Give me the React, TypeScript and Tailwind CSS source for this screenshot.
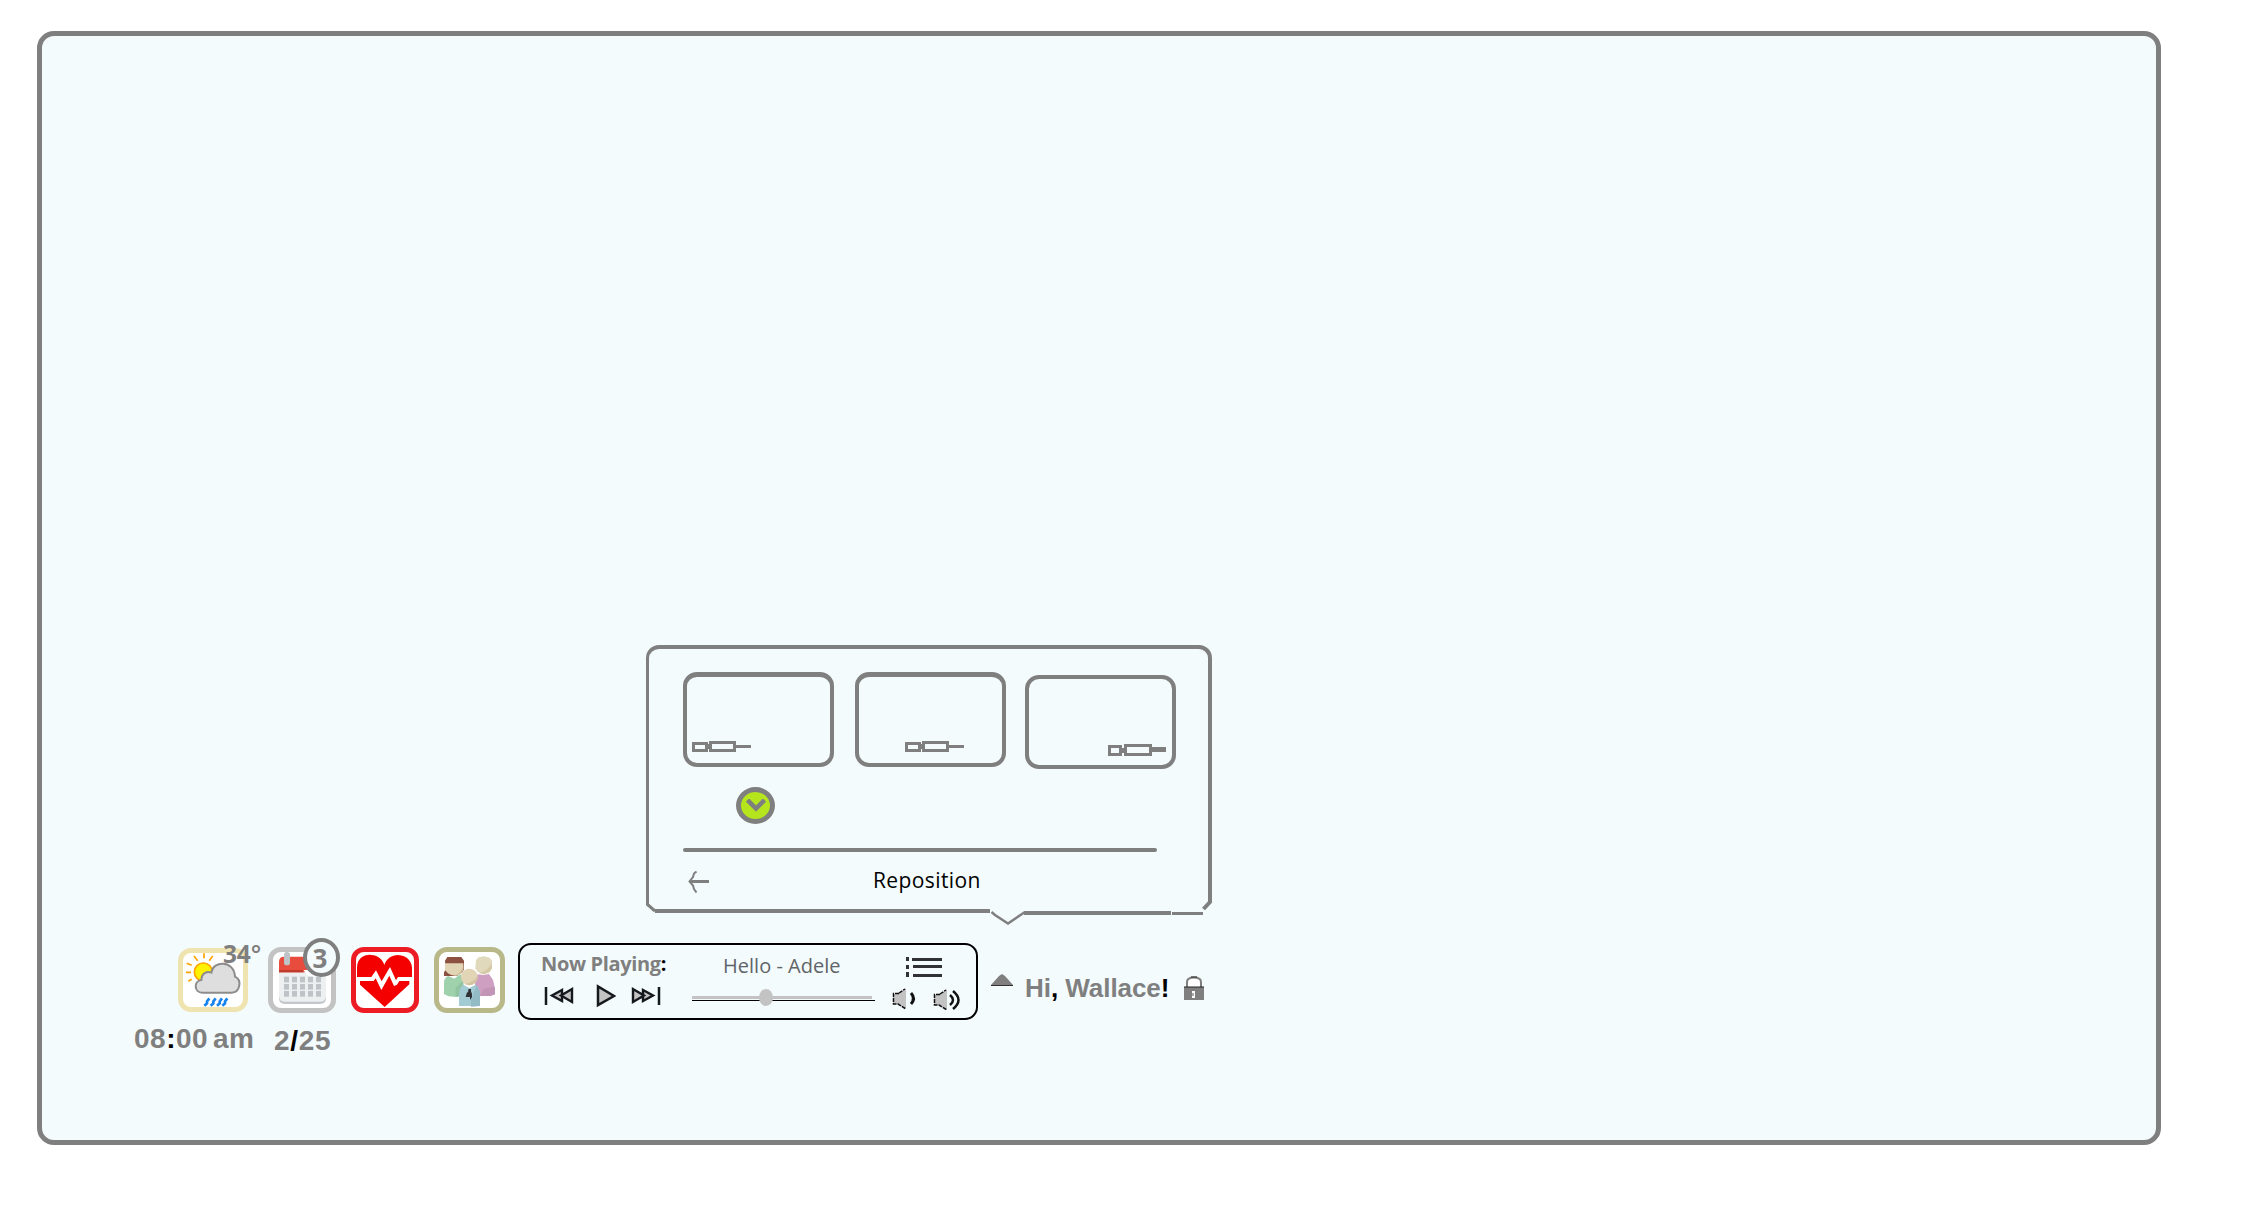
import type { ReactNode } from "react";

const GRAY = "#7f7f7f";

function DockGlyph({ tall = false }: { tall?: boolean }) {
  return (
    <svg width="60" height="12" viewBox="0 0 60 12" fill="none" stroke={GRAY} shapeRendering="crispEdges">
      {tall ? (
        <path d="M1.500 2.500H12.500V10.500H1.500ZM17.500 1.500H42.500V10.500H17.500Z" strokeWidth="3" />
      ) : (
        <path d="M1.500 3.500H14.500V10.500H1.500ZM18.500 2.500H42.500V10.500H18.500Z" strokeWidth="3" />
      )}
      <path d="M13 6.500H18" strokeWidth="5" />
      <path d={tall ? "M44 5.500H58" : "M44 6.500H59"} strokeWidth={tall ? 5 : 3} />
    </svg>
  );
}

function ScreenOption({ className, children }: { className: string; children: ReactNode }) {
  return (
    <button className={`flex w-[151px] shrink-0 items-end rounded-[14px] border-4 border-[#7f7f7f] ${className}`}>
      {children}
    </button>
  );
}

function RepositionPanel() {
  return (
    <section className="ml-[604px] flex h-[281px] w-[566px] flex-col">
      <div className="h-[255px] rounded-t-[13px] border-t-4 border-r-4 border-l-[3px] border-[#7f7f7f] pt-[23px] pl-[34px]">
        <div className="flex h-[97px] items-start">
          <ScreenOption className="h-[95px] border-t-[5px] pb-[11px] pl-[5px]">
            <DockGlyph />
          </ScreenOption>
          <ScreenOption className="ml-[21px] h-[95px] border-t-[5px] pb-[11px] pl-[46px]">
            <DockGlyph />
          </ScreenOption>
          <ScreenOption className="mt-[3px] ml-[19px] h-[94px] pb-[9px] pl-[79px]">
            <DockGlyph tall />
          </ScreenOption>
        </div>
        <div className="mt-[18px] ml-[53px] flex h-[37px] w-[39px] items-center justify-center rounded-[50%] border-[5px] border-[#7f7f7f] bg-[#b5e61d]">
          <svg className="shrink-0" width="20" height="13" viewBox="0 0 20 13" fill="none" stroke={GRAY} strokeWidth="4.500">
            <path d="M1.500 1L10 9.500L18.500 1" />
          </svg>
        </div>
        <div className="mt-6 h-1 w-[474px] rounded-full bg-[#7f7f7f]" />
        <div className="flex items-start pt-[18px]">
          <svg className="mt-px ml-[5px]" width="21" height="22" viewBox="0 0 21 22" fill="none" stroke={GRAY}>
            <path d="M2 10.500H21" strokeWidth="3" />
            <path d="M8.500 .5L6 2.500L5 6L1.500 10.500L5 14.500L6 18L8.500 21.500" strokeWidth="2" />
          </svg>
          <span className="ml-[164px] font-['Open_Sans',sans-serif] text-[21px] leading-none tracking-[0.4px] whitespace-nowrap text-black">
            Reposition
          </span>
        </div>
      </div>
      <svg width="566" height="26" viewBox="0 0 566 26" fill="none" stroke={GRAY}>
        <path d="M1.500 0V4.500L9 11" strokeWidth="3" />
        <path d="M9 11H344" strokeWidth="4" />
        <path d="M345.500 12L349 15L362 23.500L376 14L379 12" strokeWidth="2.500" />
        <path d="M378 13H525" strokeWidth="4" />
        <path d="M526 13.500H557" strokeWidth="3" />
        <path d="M564 0V2L557.500 9" strokeWidth="4" />
      </svg>
    </section>
  );
}

function WeatherIcon() {
  return (
    <svg width="60" height="54" viewBox="189 99 180 162">
      <g stroke="#ffa400" strokeWidth="5">
        <path d="M252 100V115M278 108L268 122M222 108L233 122M200 130L215 136M198 157H213M205 184L215 178" />
      </g>
      <circle cx="250" cy="156" r="27" fill="#fff200" stroke="#ffa400" strokeWidth="5" />
      <path
        d="M247 218C222 218 220 183 244 180C245 160 260 153 274 158C279 121 342 119 345 170C367 180 360 218 335 218Z"
        fill="#dededf"
        stroke="#8c8c8c"
        strokeWidth="6"
      />
      <path
        d="M268 235L261 244V250L253 257M287 235L280 244V250L272 257M306 235L299 244V250L291 257M322 235L315 244V250L307 257"
        fill="none"
        stroke="#1684ee"
        strokeWidth="8"
      />
    </svg>
  );
}

function CalendarIcon() {
  const rows = [170, 192, 213];
  const cols = [492, 516, 540, 564, 588];
  return (
    <svg width="58" height="56" viewBox="459 96 174 168">
      <path d="M477 150H618V235Q618 252 600 252H495Q477 252 477 235Z" fill="#c3c7cb" />
      <path d="M477 150H618V228Q618 245 600 245H495Q477 245 477 228Z" fill="#ecf0f1" />
      <path d="M477 157V126Q477 110 492 110H618V157Z" fill="#e84c3d" />
      <path d="M477 150H550V157H477Z" fill="#c0392b" />
      <path d="M550 150L566 170H618V150Z" fill="#fff" />
      <rect x="492" y="96" width="18" height="40" rx="8" fill="#bdc3c7" />
      {rows.map((y) =>
        cols.map((x) => <rect key={`${x}-${y}`} x={x} y={y} width="15" height="17" fill="#bdc3c7" />),
      )}
    </svg>
  );
}

function HeartIcon() {
  return (
    <svg width="58" height="56" viewBox="48 96 174 168" fill="#f40000">
      <path d="M51 171V144C51 108 84 103 93 105C113 105 129 119 133 135C139 116 156 105 174 105C201 106 216 124 216 145V171H174L168 181L150 141L125 184L108 151L94 171Z" />
      <path d="M60 183H101L107 175L124 210L148 167L162 198L171 194L178 183H208V193L134 261L60 194Z" />
    </svg>
  );
}

function PeopleIcon() {
  return (
    <svg width="61" height="56" viewBox="297 96 183 168">
      <path d="M312 168V156L317 151L315 122L322 111H364L372 122V148L366 158L350 168Z" fill="#8d5142" />
      <path d="M315 130H370V145Q366 166 345 167Q322 165 315 148Z" fill="#e1d5b5" />
      <path d="M370 136V147Q365 166 345 167Q366 155 370 136Z" fill="#d2c49f" />
      <path d="M325 168L343 176L360 163L370 170V225L350 231L325 229L312 222V185Q314 172 325 168Z" fill="#9fd1ad" />
      <path d="M347 231V204L370 180V226Z" fill="#93c4a1" />
      <path d="M413 163L430 165L447 162L459 180L465 205V223L450 228H412L405 220V180Z" fill="#cf9fc2" />
      <path d="M463 200L465 223L450 228H420L430 207Z" fill="#c294b5" />
      <path d="M408 120L416 112L432 109L449 113L456 122V145L448 157L432 163L414 157L406 145Z" fill="#e1d9bc" />
      <path d="M456 130V145L448 157L432 163L417 159Q443 153 456 130Z" fill="#d5c9a5" />
      <path d="M370 194L388 204L407 194L416 205L420 222V258H357V222Q359 202 370 194Z" fill="#a3cbd4" />
      <path d="M410 195L420 215V258L393 260V241Z" fill="#93bbc5" />
      <circle cx="388" cy="171" r="25" fill="#e1d5b5" />
      <path d="M413 168Q413 193 388 196L374 192Q403 187 413 168Z" fill="#d2c49f" />
      <path d="M385 207H393V214L396 222V232L390 240V231H377L380 220L385 214Z" fill="#303236" />
    </svg>
  );
}

function Tile({ className, children }: { className: string; children: ReactNode }) {
  return (
    <div className={`relative flex shrink-0 items-center justify-center rounded-[13px] border-[5px] bg-white ${className}`}>
      {children}
    </div>
  );
}

function SkipIcon({ flip = false }: { flip?: boolean }) {
  return (
    <svg
      className={flip ? "-scale-x-100" : ""}
      width="30"
      height="20"
      viewBox="0 0 30 20"
      fill="#c3c3c3"
      stroke="#15181c"
      strokeWidth="2.400"
    >
      <path d="M2 1V19" strokeWidth="2.500" />
      <path d="M18 4V15L8 9.500ZM28 3V16L17 9.500Z" />
    </svg>
  );
}

function Speaker({ loud = false }: { loud?: boolean }) {
  return (
    <svg width="28" height="22" viewBox="0 0 28 22" fill="none">
      <path d="M1 6H6L14 0V21L6 16H1Z" fill="#c3c3c3" />
      <path d="M7 5.500H1.500V16H6L14 21M7 5L13 1" stroke="#111" strokeWidth="1.500" strokeDasharray="4 1" />
      {loud ? (
        <path d="M17 6Q23 11 17 16M20 2Q31 11 20 20" stroke="#111" strokeWidth="2.500" />
      ) : (
        <path d="M19 5Q24 10.500 19 16" stroke="#111" strokeWidth="3" />
      )}
    </svg>
  );
}

function Player() {
  return (
    <div className="mt-[5px] ml-[13px] flex h-[77px] w-[460px] shrink-0 flex-col rounded-[13px] border-2 border-black">
      <div className="flex h-[36px] items-start pt-[9px] pl-[21px] font-['Open_Sans',sans-serif] text-[20px] leading-none whitespace-nowrap text-[#7f7f7f]">
        <span className="w-[182px] font-bold tracking-[-0.35px]">
          Now Playing<span className="text-black">:</span>
        </span>
        <span className="mt-[2px] w-[183px] tracking-[0.02px] text-[#606468]">Hello - Adele</span>
        <svg className="mt-[3px]" width="36" height="20" viewBox="0 0 36 20" fill="#303236" shapeRendering="crispEdges">
          <path d="M0 0H3V4H0ZM6 1H36V4H6ZM0 8H3V12H0ZM7 8H36V11H7ZM0 15H3V20H0ZM7 17H36V20H7Z" />
        </svg>
      </div>
      <div className="flex items-start pl-[24px]">
        <div className="mt-[5px]">
          <SkipIcon />
        </div>
        <svg className="mt-[3px] ml-[22px]" width="20" height="24" viewBox="0 0 20 24" fill="#c3c3c3" stroke="#15181c" strokeWidth="2.500">
          <path d="M2 2.500V21L18 12Z" />
        </svg>
        <div className="mt-[5px] ml-[15px]">
          <SkipIcon flip />
        </div>
        <div className="relative mt-[15px] ml-[31px] w-[183px]">
          <div className="h-[3px] w-[180px] bg-[#c3c3c3]" />
          <div className="mt-px h-px w-[183px] bg-black" />
          <div className="absolute -top-[7px] left-[67px] h-[17px] w-[14px] rounded-[50%] bg-[#c3c3c3]" />
        </div>
        <div className="mt-[7px] ml-[17px]">
          <Speaker />
        </div>
        <div className="mt-[8px] ml-[13px]">
          <Speaker loud />
        </div>
      </div>
    </div>
  );
}

function Greeting() {
  return (
    <div className="mt-[36px] ml-[13px] flex shrink-0 items-start">
      <svg width="22" height="12" viewBox="0 0 22 12">
        <path d="M0 11L8 2L11 0L14 2L22 11Z" fill={GRAY} />
        <path d="M0 11.500H22" stroke="#333" />
      </svg>
      <span className="mt-px ml-[12px] w-[159px] font-['Liberation_Sans',sans-serif] text-[26px] leading-none font-bold tracking-[-0.05px] whitespace-nowrap text-[#7f7f7f]">
        Hi<span className="text-black">,</span> Wallace<span className="text-black">!</span>
      </span>
      <svg className="mt-[2px]" width="20" height="24" viewBox="0 0 20 24">
        <path d="M3 11V6Q3 1.500 10 1.500Q17 1.500 17 6V11" fill="#fff" stroke={GRAY} strokeWidth="2" />
        <rect y="11" width="20" height="13" fill={GRAY} />
        <path d="M0 11H20M7 1H13" stroke="#222" />
        <path d="M8 15H11V22H8Z" fill="#fff" />
        <path d="M9 17V20" stroke="#555" />
      </svg>
    </div>
  );
}

function Dock() {
  return (
    <footer className="mt-[12px]">
      <div className="flex h-[82px] items-start pl-[136px]">
        <Tile className="mt-[10px] h-[64px] w-[70px] border-[#efe4b0]">
          <WeatherIcon />
          <span className="absolute -top-[11px] left-[40px] font-['Open_Sans',sans-serif] text-[24.500px] leading-none font-bold tracking-[-0.2px] whitespace-nowrap text-[#7f7f7f]">
            34<span className="font-semibold">°</span>
          </span>
        </Tile>
        <Tile className="mt-[9px] ml-[20px] h-[66px] w-[68px] border-[#c3c3c3]">
          <CalendarIcon />
          <span className="absolute -top-[14px] left-[30px] flex h-[39px] w-[37px] items-center justify-center rounded-[50%] border-4 border-[#7f7f7f] bg-[#f3fbfd] pr-[3px] font-['Open_Sans',sans-serif] text-[26px] leading-none font-bold text-[#7f7f7f]">
            3
          </span>
        </Tile>
        <Tile className="mt-[9px] ml-[15px] h-[66px] w-[68px] border-[#ed1c24]">
          <HeartIcon />
        </Tile>
        <Tile className="mt-[9px] ml-[15px] h-[66px] w-[71px] border-[#b8b888]">
          <PeopleIcon />
        </Tile>
        <Player />
        <Greeting />
      </div>
      <div className="flex pt-[5px] pl-[92px] font-['Liberation_Sans',sans-serif] text-[28px] leading-none font-bold whitespace-nowrap text-[#7f7f7f]">
        <span className="w-[79px] tracking-[0.5px]">
          08<span className="text-black">:</span>00
        </span>
        <span className="w-[61px] tracking-[0.5px]">am</span>
        <span className="mt-[2px] tracking-[0.7px]">
          2<span className="text-black">/</span>25
        </span>
      </div>
    </footer>
  );
}

export default function App() {
  return (
    <main className="h-[1217px] w-[2248px] overflow-hidden bg-white pt-[31px] pl-[37px]">
      <div className="h-[1114px] w-[2124px] rounded-[17px] border-[5px] border-[#7f7f7f] bg-[#f3fbfd] pt-[609px]">
        <RepositionPanel />
        <Dock />
      </div>
    </main>
  );
}
